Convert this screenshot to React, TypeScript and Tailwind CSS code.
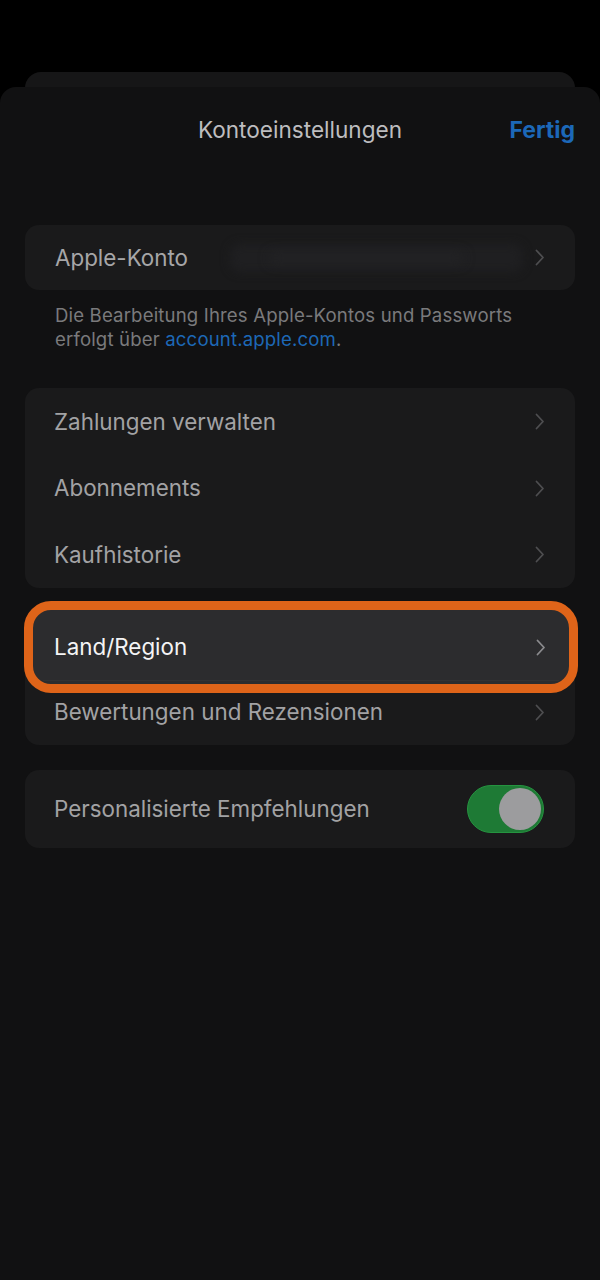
import React from "react";

function Chevron({ className = "" }: { className?: string }) {
  return (
    <svg width="10" height="17" viewBox="0 0 10 17" className={className} fill="none">
      <polyline points="1.5,1.5 8,8.5 1.5,15.5" stroke="currentColor" strokeWidth="1.8" strokeLinecap="round" strokeLinejoin="round" />
    </svg>
  );
}

function Row({ label }: { label: string }) {
  return (
    <div className="flex-1 flex items-center justify-between pl-[29px] pr-[30px]">
      <span className="text-[22.4px] text-[#a2a2a4]">{label}</span>
      <Chevron className="text-[#4e4e50]" />
    </div>
  );
}

export default function App() {
  return (
    <div className="min-h-[1280px] bg-black" style={{ fontFamily: "Inter, 'Noto Sans', sans-serif" }}>
      <div className="pt-[72px] px-[25px]">
        <div className="h-[30px] bg-[#161617] rounded-t-[16px]" />
      </div>
      <div className="-mt-[15px] bg-[#111112] rounded-t-[16px] min-h-[1193px] pb-10">
        <div className="h-[86px] relative flex items-center justify-center">
          <span className="text-[22.6px] text-[#bdbdbf]">Kontoeinstellungen</span>
          <span className="absolute right-[25px] top-1/2 -translate-y-1/2 text-[23px] font-bold text-[#1c68b8]">Fertig</span>
        </div>

        <div className="px-[25px] mt-[52px]">
          <div className="h-[65px] bg-[#1a1a1b] rounded-[14px] flex items-center pl-[30px] pr-[30px]">
            <span className="text-[22.4px] text-[#a6a6a8]">Apple-Konto</span>
            <div className="flex-1 flex items-center ml-[42px] mr-[12px] h-[28px] relative">
              <div className="absolute inset-0 rounded-[10px] bg-[#1f1f21] blur-[5px]" />
              <div className="absolute left-[40px] right-[60px] top-[9px] h-[10px] rounded-full bg-[#232325] blur-[6px]" />
            </div>
            <Chevron className="text-[#4e4e50]" />
          </div>

          <div className="pl-[30px] mt-[13px] text-[18.6px] leading-[24px] text-[#7a7a7c] tracking-[0.15px]">
            Die Bearbeitung Ihres Apple-Kontos und Passworts
            <br />
            erfolgt über <span className="text-[#1d68b6]">account.apple.com</span>.
          </div>

          <div className="mt-[37px] h-[200px] bg-[#1a1a1b] rounded-[14px] flex flex-col">
            <Row label="Zahlungen verwalten" />
            <Row label="Abonnements" />
            <Row label="Kaufhistorie" />
          </div>

          <div className="mt-[25px] h-[132px] bg-[#1a1a1b] rounded-[14px] flex flex-col">
            <div className="h-[66px] relative">
              <div className="absolute -top-[12px] -bottom-[14px] -left-[1px] -right-[3px] rounded-[27px] border-[9px] border-[#df6419] bg-[#2c2c2e] flex items-center justify-between pl-[21px] pr-[23px] z-10">
                <span className="text-[22.4px] text-[#f4f4f5]">Land/Region</span>
                <Chevron className="text-[#8b8b8e]" />
                <div className="absolute left-[10px] right-[10px] bottom-[3px] h-px bg-[#323234]" />
              </div>
            </div>
            <Row label="Bewertungen und Rezensionen" />
          </div>

          <div className="mt-[25px] h-[78px] bg-[#1a1a1b] rounded-[14px] flex items-center justify-between pl-[29px] pr-[31px]">
            <span className="text-[22.4px] text-[#a2a2a4]">Personalisierte Empfehlungen</span>
            <div className="w-[77px] h-[48px] rounded-full bg-[#1e7a35] border border-[#259440] flex items-center justify-end pr-[2px]">
              <div className="w-[42px] h-[42px] rounded-full bg-[#9c9c9e]" />
            </div>
          </div>
        </div>
      </div>
    </div>
  );
}
